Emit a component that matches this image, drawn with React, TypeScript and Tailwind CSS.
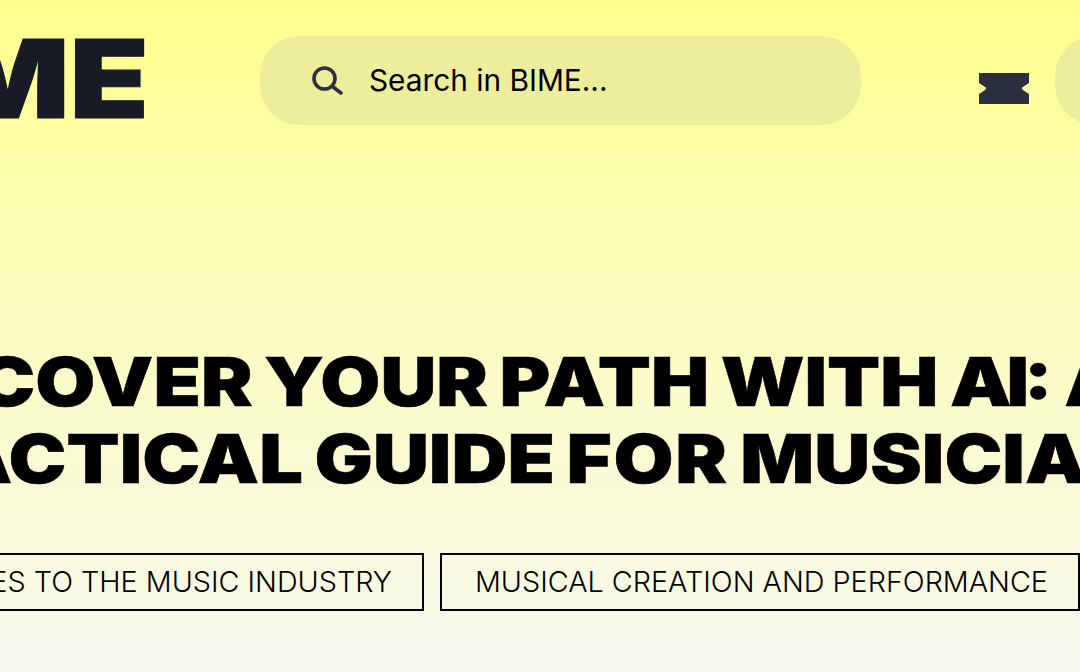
import React from 'react';

const SearchIcon = () => (
  <svg width="31" height="29" viewBox="0 0 31 29" fill="none" stroke="#2a3042" strokeWidth="3.6" strokeLinecap="round">
    <circle cx="12.5" cy="12.5" r="10.5" />
    <path d="M20.5 20.5 L29 27" />
  </svg>
);

const TicketIcon = () => (
  <svg width="50" height="31" viewBox="0 0 50 31" fill="#2a3042">
    <path d="M0 0H50V10L43.5 14.3Q42.5 15.5 43.5 16.7L50 21V31H0V21L6.5 16.7Q7.5 15.5 6.5 14.3L0 10Z" />
  </svg>
);

const tags = ['APPLIED TECHNOLOGIES TO THE MUSIC INDUSTRY', 'MUSICAL CREATION AND PERFORMANCE'];

const App: React.FC = () => {
  return (
    <div className="h-[672px] w-[1080px] overflow-hidden bg-gradient-to-b from-[#ffff8c] to-[#f7f8ee] font-['Inter',sans-serif] text-black">
      <header className="flex items-center pt-9">
        <div className="flex h-[89px] w-[144px] shrink-0 items-center justify-end pb-[3px]">
          <span className="-mr-[5px] whitespace-nowrap text-[108px] leading-none font-black text-[#161b26] [-webkit-text-stroke:1px_#161b26] [transform-origin:right] [transform:scaleX(1.2)]">
            BIME
          </span>
        </div>
        <div className="ml-[116px] flex h-[89px] w-[601px] shrink-0 items-center rounded-[40px] bg-[#edee9c] pl-[52px]">
          <SearchIcon />
          <span className="ml-[26px] text-[29.8px] leading-none text-black">Search in BIME...</span>
        </div>
        <div className="mt-[15px] ml-[118px] shrink-0">
          <TicketIcon />
        </div>
        <div className="ml-[26px] h-[89px] w-[120px] shrink-0 rounded-[40px] bg-[#edee9c]" />
      </header>
      <main className="mt-[218px] flex flex-col items-center">
        <h1 className="flex w-[1080px] flex-col items-center text-[68px] leading-[77px] font-black whitespace-nowrap [-webkit-text-stroke:0.5px_#000] [word-spacing:-3.5px] [transform:scaleX(1.14)]">
          <span className="mr-[94px]">
            DISCOVER YOUR PATH WITH <span className="tracking-[-4.5px]">AI</span>: A
          </span>
          <span className="mr-[30px]">
            PRACTICAL GUIDE <span className="tracking-[1.5px]">FOR</span> MUSICIANS
          </span>
        </h1>
        <div className="mt-[56px] flex w-[1080px] justify-end gap-4">
          {tags.map((t) => (
            <div
              key={t}
              className="flex h-[58px] shrink-0 items-center border-2 border-black pr-[30px] pl-[33px] text-[28.75px] font-[350] whitespace-nowrap"
            >
              {t}
            </div>
          ))}
        </div>
      </main>
    </div>
  );
};

export default App;
